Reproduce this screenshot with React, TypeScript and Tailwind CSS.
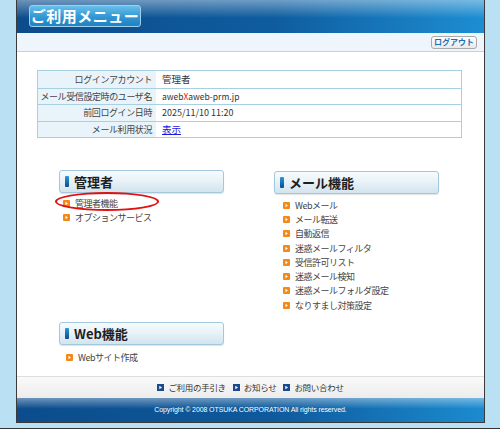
import React from 'react';

const jp = { fontFamily: '"Noto Sans CJK JP", "Liberation Sans", sans-serif' };

function Bullet() {
  return (
    <span className="inline-flex h-[7px] w-[7px] shrink-0 items-center justify-center rounded-[1px] bg-[#f28a1a]">
      <svg width="5" height="5" viewBox="0 0 5 5">
        <path d="M1.5 0.8 L3.8 2.5 L1.5 4.2 Z" fill="#fff" />
      </svg>
    </span>
  );
}

function FooterIcon() {
  return (
    <span className="inline-flex h-[7px] w-[7px] shrink-0 items-center justify-center bg-[#1b4b8c]">
      <svg width="5" height="5" viewBox="0 0 5 5">
        <path d="M1.3 0.8 L4 2.5 L1.3 4.2 Z" fill="#fff" />
      </svg>
    </span>
  );
}

function SectionHead({ title }: { title: string }) {
  return (
    <div className="flex h-[23px] w-[165px] items-center gap-[5px] rounded-[3px] border border-[#a3c8de] bg-[linear-gradient(to_bottom,#f7fbfd,#e9f3f8_45%,#d2e4ee)] pl-[5px] shadow-[0_1px_1px_rgba(0,0,0,0.12)]">
      <span className="h-[11px] w-[4px] rounded-[1px] bg-[linear-gradient(to_bottom,#2a98d8,#0a4c90)]" />
      <span className="text-[13px] font-bold leading-none text-[#1e1e1e]">{title}</span>
    </div>
  );
}

function Item({ label }: { label: string }) {
  return (
    <div className="flex h-[14.3px] items-center gap-[5px]">
      <Bullet />
      <span className="whitespace-nowrap text-[9px] leading-none tracking-[-0.5px] text-[#444]">{label}</span>
    </div>
  );
}

const mailItems = [
  'Webメール',
  'メール転送',
  '自動返信',
  '迷惑メールフィルタ',
  '受信許可リスト',
  '迷惑メール検知',
  '迷惑メールフォルダ設定',
  'なりすまし対策設定',
];

export default function App() {
  return (
    <div style={jp} className="flex h-[429px] w-[500px] flex-col border-b border-[#333] bg-[#b9e0f3] pl-[16px] pr-[15px]">
      <div className="flex h-[423px] flex-col border-x border-b border-[#3a3a3a] bg-white">
        {/* header */}
        <div className="flex h-[33px] items-start bg-[linear-gradient(to_bottom,rgba(255,255,255,0.4),rgba(255,255,255,0)_55%),linear-gradient(to_right,#0c4c8c,#0e5c9e_55%,#1d8ed2)] pl-[12px] pt-[5px]">
          <div className="flex h-[22px] w-[112px] items-center justify-center rounded-[3px] border border-[#9fd0ec] bg-[linear-gradient(to_bottom,#68bfea,#3196d3_55%,#1f82c4)] text-[15px] font-bold tracking-[0.5px] text-white">
            ご利用メニュー
          </div>
        </div>
        <div className="flex h-[19px] items-center justify-end border-b border-[#b9d6e8] bg-[#eef5fc] pr-[7px]">
          <div className="flex h-[13px] w-[46px] items-center justify-center rounded-[3px] border border-[#a9a9a9] bg-[linear-gradient(to_bottom,#ffffff,#e9e9e9)] text-[8px] font-bold leading-none text-[#1b6fb8]">
            ログアウト
          </div>
        </div>

        {/* content */}
        <div className="relative flex-1">
          <div className="ml-[20px] mt-[18px] w-[425px] border border-[#a9cfe3]">
            {[
              ['ログインアカウント', <span>管理者</span>],
              [
                'メール受信設定時のユーザ名',
                <span className="text-[8.5px]">
                  aweb<span className="text-[#e81010]">X</span>aweb-prm.jp
                </span>,
              ],
              ['前回ログイン日時', <span className="text-[9px]">2025/11/10 11:20</span>],
              ['メール利用状況', <span className="text-[#1a1adc] underline">表示</span>],
            ].map(([label, value], i) => (
              <div key={i} className={`flex h-[16.5px] ${i > 0 ? 'border-t border-[#a9cfe3]' : ''}`}>
                <div className="flex w-[118px] items-center justify-end whitespace-nowrap bg-[#e9f3fa] pr-[4px] text-[9px] leading-none tracking-[-0.4px] text-[#444]">
                  {label}
                </div>
                <div className="flex flex-1 items-center whitespace-nowrap pl-[6px] text-[9.5px] leading-none text-[#333]">{value}</div>
              </div>
            ))}
          </div>

          <div className="ml-[42px] mt-[32px] grid grid-cols-[165px_165px] gap-x-[50px]">
            <div>
              <SectionHead title="管理者" />
              <div className="mt-[3px] pl-[4px]">
                <Item label="管理者機能" />
                <Item label="オプションサービス" />
              </div>
            </div>
            <div className="pt-[1px]">
              <SectionHead title="メール機能" />
              <div className="mt-[4px] pl-[9px]">
                {mailItems.map((m) => (
                  <Item key={m} label={m} />
                ))}
              </div>
            </div>
            <div className="mt-[10px]">
              <SectionHead title="Web機能" />
              <div className="mt-[5px] pl-[7px]">
                <Item label="Webサイト作成" />
              </div>
            </div>
          </div>

          {/* red circle annotation */}
          <div className="absolute left-[38px] top-[140px] h-[19px] w-[104px] rounded-[50%] border-[2.5px] border-[#e01010]" />
        </div>

        {/* footer links */}
        <div className="flex h-[22px] items-center justify-center gap-[7px] border-t border-[#dedede] bg-[linear-gradient(to_bottom,#fafafa,#ececec)] text-[8.5px] leading-none tracking-[-0.3px] text-[#333]">
          <span className="flex items-center gap-[4px]">
            <FooterIcon />
            ご利用の手引き
          </span>
          <span className="flex items-center gap-[4px]">
            <FooterIcon />
            お知らせ
          </span>
          <span className="flex items-center gap-[4px]">
            <FooterIcon />
            お問い合わせ
          </span>
        </div>
        <div
          style={{ fontFamily: '"Liberation Sans", sans-serif' }}
          className="flex h-[24px] items-center justify-center bg-[linear-gradient(to_bottom,rgba(255,255,255,0.4),rgba(255,255,255,0)_45%),linear-gradient(to_right,#0c4c8c,#0e5a9c_55%,#1b8bd0)] text-[7px] tracking-[-0.1px] text-white"
        >
          Copyright © 2008 OTSUKA CORPORATION All rights reserved.
        </div>
      </div>
    </div>
  );
}
